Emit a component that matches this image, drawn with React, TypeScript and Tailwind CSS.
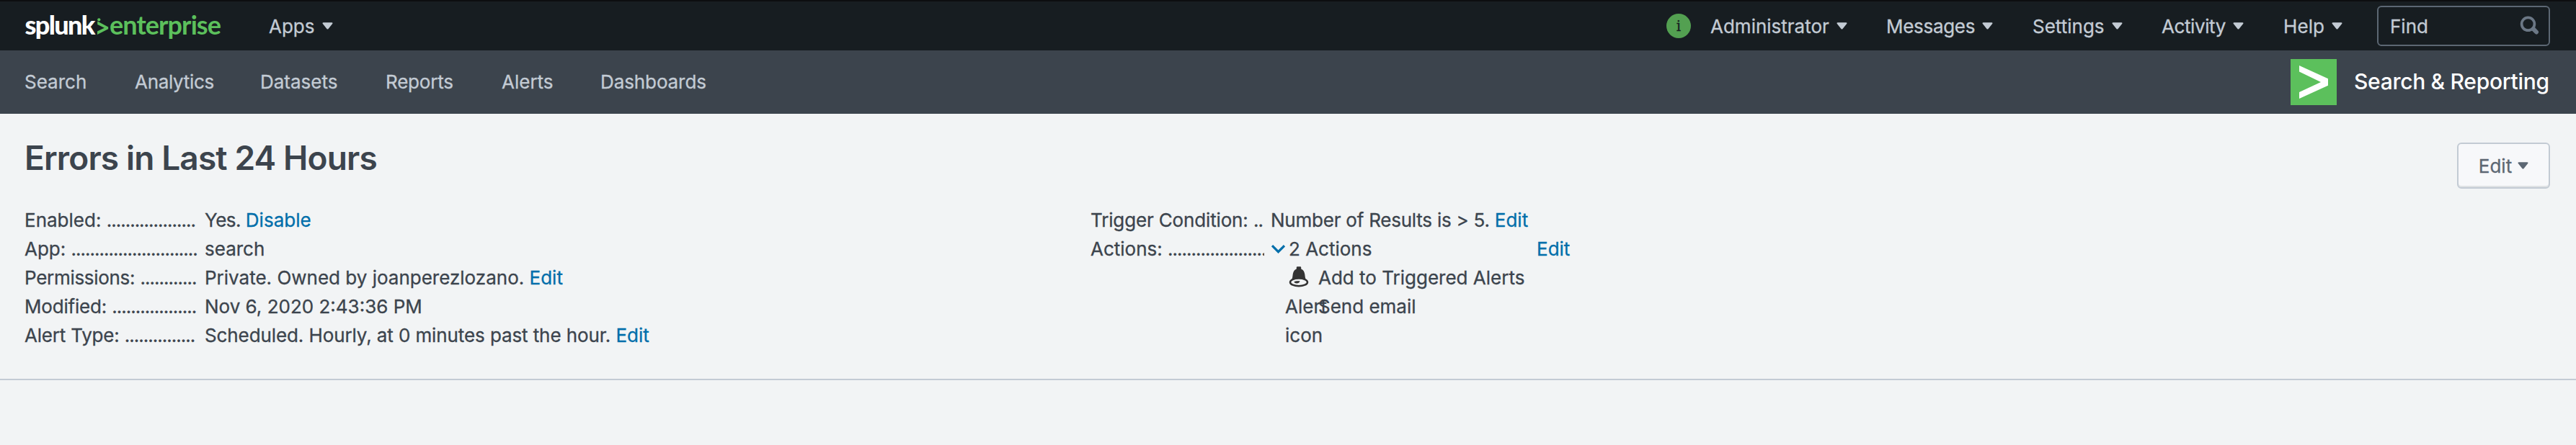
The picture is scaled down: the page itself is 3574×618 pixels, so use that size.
import type { ReactNode } from "react";

function Caret() {
  return (
    <svg className="h-[10px] w-[15px] shrink-0" viewBox="0 0 15 10" fill="currentColor">
      <path d="M1.6 0.3h11.8c1 0 1.4 1 .8 1.8L8.600 8.900c-.6.8-1.600.8-2.200 0L.8 2.100C.2 1.300.6.3 1.600.3z" />
    </svg>
  );
}

function SplunkLogo() {
  return (
    <svg className="h-[60px] w-[280px] [-webkit-text-stroke:0]" viewBox="30 5 280 60">
      <text x="34.5" y="47.300" textLength="98" fontFamily="Lato, sans-serif" fontWeight="900" fontSize="36" fill="#fff">
        splunk
      </text>
      <circle cx="137.300" cy="26.300" r="2.100" fill="#5cc05c" />
      <path d="M135.200 28.600 150.200 36.400v2.800L135 46.900v-4.400l9.800-4.700-9.600-4.800z" fill="#5cc05c" />
      <text x="152" y="47.300" textLength="155" fontFamily="Lato, sans-serif" fontWeight="700" fontSize="36" fill="#5cc05c">
        enterprise
      </text>
    </svg>
  );
}

function MenuItem({ label, className }: { label: string; className: string }) {
  return (
    <button className={`flex shrink-0 items-center gap-[10px] ${className}`}>
      <span>{label}</span>
      <Caret />
    </button>
  );
}

function TopBar() {
  return (
    <header className="flex h-[70px] items-center border-t-2 border-[#0d0e10] bg-[#171d21] pr-9 pl-[30px] text-[#c3cbd4]">
      <SplunkLogo />
      <MenuItem label="Apps" className="ml-[63px]" />
      <div className="ml-auto flex items-center">
        <span className="mr-[27px] flex size-[34px] items-center justify-center rounded-full bg-[#53a051] font-['DejaVu_Serif',serif] text-[20px] leading-none text-[#171d21]">
          i
        </span>
        <MenuItem label="Administrator" className="w-[244px]" />
        <MenuItem label="Messages" className="w-[203px] tracking-[-0.3px]" />
        <MenuItem label="Settings" className="w-[179px]" />
        <MenuItem label="Activity" className="w-[169px] tracking-[-0.4px]" />
        <MenuItem label="Help" className="w-[130px] tracking-[0.1px]" />
        <div className="flex h-14 w-60 items-center justify-between rounded-[6px] border-2 border-[#5c6773] pr-[13px] pl-4">
          <span>Find</span>
          <svg className="mb-[3px] h-[26px] w-[27px]" viewBox="0 0 27 26" fill="none" stroke="#6b7785">
            <circle cx="11.500" cy="11.300" r="8.900" strokeWidth="3.700" />
            <path d="M18.800 18.200l4.200 4.300" strokeWidth="6" strokeLinecap="round" />
          </svg>
        </div>
      </div>
    </header>
  );
}

function NavBar() {
  return (
    <nav className="flex h-[88px] items-center bg-[#3c444d] pr-9 pl-[34px] text-[#c3cbd4]">
      <div className="flex pb-[2px]">
        <a className="w-[153px]">Search</a>
        <a className="w-[174px] tracking-[-0.3px]">Analytics</a>
        <a className="w-[174px]">Datasets</a>
        <a className="w-[161px] tracking-[-0.2px]">Reports</a>
        <a className="w-[137px]">Alerts</a>
        <a className="tracking-[-0.1px]">Dashboards</a>
      </div>
      <div className="ml-auto flex items-center">
        <svg className="size-16 bg-[#5cc05c]" viewBox="0 0 64 64" fill="#fff">
          <path d="M12 9l40 18.200v9.600L12 55v-9l30-14L12 17.500z" />
        </svg>
        <span className="ml-6 w-[272px] pb-[2px] text-[30px] font-medium tracking-[-0.3px] whitespace-nowrap text-white [-webkit-text-stroke:0]">
          Search &amp; Reporting
        </span>
      </div>
    </nav>
  );
}

function Row({ label, labelClass = "", dots, children }: { label: string; labelClass?: string; dots: number; children: ReactNode }) {
  return (
    <div className="flex">
      <dt className="mr-[9px] h-10 w-[241px] shrink-0 overflow-hidden">
        <span className={labelClass}>{label}</span> <span className="tracking-[-1px]">{".".repeat(dots)}</span>
      </dt>
      <dd>{children}</dd>
    </div>
  );
}

function Link({ children }: { children: ReactNode }) {
  return <a className="text-[#006eaa]">{children}</a>;
}

function BellIcon() {
  return (
    <svg className="h-[29px] w-7" viewBox="0 0 28 29" fill="#333">
      <path d="M10.800 1.500c0-.8.6-1.300 1.400-1.300h3.600c.8 0 1.400.5 1.400 1.300v1.900c3.400 1.300 4.600 4.200 5.100 7.600.4 3.400.7 6.200 2 8.500H3.700c1.300-2.300 1.600-5.100 2-8.500.5-3.400 1.700-6.300 5.100-7.600z" />
      <ellipse cx="14" cy="21.900" rx="12" ry="5.300" fill="#f2f4f5" stroke="#333" strokeWidth="2.500" />
      <path d="M7.500 21.200c2-1 4.500-1.200 8-.9-.6 2.200-2.300 3.300-4.600 3.200-1.900-.1-3-.9-3.400-2.300z" />
    </svg>
  );
}

function Details() {
  return (
    <div className="mt-[39px] flex whitespace-nowrap leading-10">
      <dl className="w-[1479px]">
        <Row label="Enabled:" dots={19}>
          <span className="tracking-[-0.5px]">Yes. </span>
          <Link>Disable</Link>
        </Row>
        <Row label="App:" dots={27}>
          search
        </Row>
        <Row label="Permissions:" labelClass="tracking-[-0.3px]" dots={12}>
          Private. Owned by joanperezlozano. <Link>Edit</Link>
        </Row>
        <Row label="Modified:" labelClass="tracking-[-0.2px]" dots={18}>
          Nov 6, 2020 2:43:36 PM
        </Row>
        <Row label="Alert Type:" labelClass="tracking-[-0.2px]" dots={15}>
          <span className="tracking-[-0.1px]">Scheduled. Hourly, at 0 minutes past the hour. </span>
          <Link>Edit</Link>
        </Row>
      </dl>
      <dl>
        <Row label="Trigger Condition:" labelClass="tracking-[-0.15px]" dots={2}>
          <span className="tracking-[-0.23px]">Number of Results is &gt; 5. </span>
          <Link>Edit</Link>
        </Row>
        <Row label="Actions:" dots={21}>
          <div className="flex items-center">
            <svg className="mr-[5px] h-3 w-5" viewBox="0 0 20 12" fill="none" stroke="#006eaa" strokeWidth="3.200">
              <path d="M2 1.200l8.500 8.500L19 1.200" />
            </svg>
            <span className="w-[344px]">2 Actions</span>
            <Link>Edit</Link>
          </div>
          <ul className="ml-5">
            <li className="flex h-10">
              <div className="w-[46px] whitespace-normal">
                <div className="flex h-10 items-center pb-[3px] pl-[5px]">
                  <BellIcon />
                </div>
                Alert icon
              </div>
              Add to Triggered Alerts
            </li>
            <li className="h-10 pl-[46px]">Send email</li>
          </ul>
        </Row>
      </dl>
    </div>
  );
}

export default function App() {
  return (
    <div className="h-[618px] w-full bg-[#f2f4f5] font-['Inter','Liberation_Sans',sans-serif] text-[26px] text-[#3c444d] [-webkit-text-stroke:0.3px]">
      <TopBar />
      <NavBar />
      <main className="h-[370px] border-b-2 border-[#c3cbd4] pt-[33px] pr-9 pl-[34px]">
        <div className="flex h-14 justify-between">
          <h1 className="text-[46px] leading-[56px] font-semibold tracking-[-0.85px] [-webkit-text-stroke:0]">
            Errors in Last 24 Hours
          </h1>
          <button className="mt-[7px] flex h-16 w-[129px] items-center justify-center gap-2 rounded-[6px] border-2 border-[#c3cbd4] bg-[#f7f8fa] text-[#5c6773] shadow-[inset_0_-2px_0_#dfe2e4]">
            Edit
            <Caret />
          </button>
        </div>
        <Details />
      </main>
    </div>
  );
}
